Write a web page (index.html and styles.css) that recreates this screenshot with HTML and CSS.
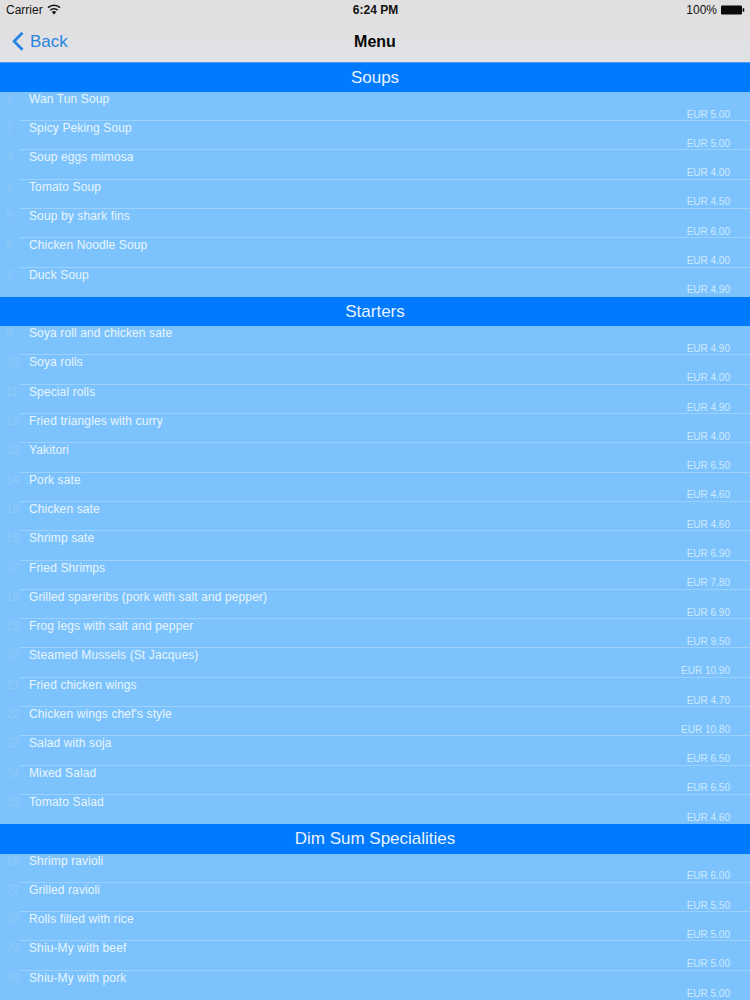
FILE: index.html
```html
<!DOCTYPE html>
<html lang="en">
<head>
<meta charset="utf-8">
<title>Menu</title>
<link rel="stylesheet" href="styles.css">
</head>
<body>
<header class="chrome">
  <div class="status">
    <div class="status-left"><span>Carrier</span>
      <svg class="wifi" viewBox="0 0 14 11" width="14" height="11"><path d="M7 10.4 4.8 8a3.1 3.1 0 0 1 4.4 0Z" fill="#111"/><path d="M3.3 6.2a5.3 5.3 0 0 1 7.4 0M1 3.6a8.6 8.6 0 0 1 12 0" fill="none" stroke="#111" stroke-width="1.5"/></svg>
    </div>
    <div class="status-time">6:24 PM</div>
    <div class="status-right"><span>100%</span>
      <svg class="battery" viewBox="0 0 24 10" width="24" height="10"><rect x="0" y="0.5" width="21" height="9" rx="1.2" fill="#0a0a0a"/><rect x="21.6" y="3.3" width="1.6" height="3.4" fill="#0a0a0a"/></svg>
    </div>
  </div>
  <nav class="navbar">
    <a class="back"><svg viewBox="0 0 14 22" width="14" height="21"><path d="M11.7 1.8 3 10.8l8.7 8.9" fill="none" stroke="#2a84e0" stroke-width="3"/></svg><span>Back</span></a>
    <h1 class="title">Menu</h1>
  </nav>
</header>
<main>
  <h2 class="section">Soups</h2>
  <div class="row"><span class="num">1</span><span class="name">Wan Tun Soup</span><span class="price">EUR 5.00</span></div>
  <div class="row"><span class="num">2</span><span class="name">Spicy Peking Soup</span><span class="price">EUR 5.00</span></div>
  <div class="row"><span class="num">3</span><span class="name">Soup eggs mimosa</span><span class="price">EUR 4.00</span></div>
  <div class="row"><span class="num">4</span><span class="name">Tomato Soup</span><span class="price">EUR 4.50</span></div>
  <div class="row"><span class="num">5</span><span class="name">Soup by shark fins</span><span class="price">EUR 6.00</span></div>
  <div class="row"><span class="num">6</span><span class="name">Chicken Noodle Soup</span><span class="price">EUR 4.00</span></div>
  <div class="row"><span class="num">7</span><span class="name">Duck Soup</span><span class="price">EUR 4.90</span></div>
  <h2 class="section">Starters</h2>
  <div class="row"><span class="num">9</span><span class="name">Soya roll and chicken sate</span><span class="price">EUR 4.90</span></div>
  <div class="row"><span class="num">10</span><span class="name">Soya rolls</span><span class="price">EUR 4.00</span></div>
  <div class="row"><span class="num">11</span><span class="name">Special rolls</span><span class="price">EUR 4.90</span></div>
  <div class="row"><span class="num">12</span><span class="name">Fried triangles with curry</span><span class="price">EUR 4.00</span></div>
  <div class="row"><span class="num">13</span><span class="name">Yakitori</span><span class="price">EUR 6.50</span></div>
  <div class="row"><span class="num">14</span><span class="name">Pork sate</span><span class="price">EUR 4.60</span></div>
  <div class="row"><span class="num">15</span><span class="name">Chicken sate</span><span class="price">EUR 4.60</span></div>
  <div class="row"><span class="num">16</span><span class="name">Shrimp sate</span><span class="price">EUR 6.90</span></div>
  <div class="row"><span class="num">17</span><span class="name">Fried Shrimps</span><span class="price">EUR 7.80</span></div>
  <div class="row"><span class="num">18</span><span class="name">Grilled spareribs (pork with salt and pepper)</span><span class="price">EUR 6.90</span></div>
  <div class="row"><span class="num">19</span><span class="name">Frog legs with salt and pepper</span><span class="price">EUR 9.50</span></div>
  <div class="row"><span class="num">20</span><span class="name">Steamed Mussels (St Jacques)</span><span class="price">EUR 10.90</span></div>
  <div class="row"><span class="num">21</span><span class="name">Fried chicken wings</span><span class="price">EUR 4.70</span></div>
  <div class="row"><span class="num">22</span><span class="name">Chicken wings chef's style</span><span class="price">EUR 10.80</span></div>
  <div class="row"><span class="num">23</span><span class="name">Salad with soja</span><span class="price">EUR 6.50</span></div>
  <div class="row"><span class="num">24</span><span class="name">Mixed Salad</span><span class="price">EUR 6.50</span></div>
  <div class="row"><span class="num">25</span><span class="name">Tomato Salad</span><span class="price">EUR 4.60</span></div>
  <h2 class="section">Dim Sum Specialities</h2>
  <div class="row"><span class="num">26</span><span class="name">Shrimp ravioli</span><span class="price">EUR 6.00</span></div>
  <div class="row"><span class="num">27</span><span class="name">Grilled ravioli</span><span class="price">EUR 5.50</span></div>
  <div class="row"><span class="num">28</span><span class="name">Rolls filled with rice</span><span class="price">EUR 5.00</span></div>
  <div class="row"><span class="num">29</span><span class="name">Shiu-My with beef</span><span class="price">EUR 5.00</span></div>
  <div class="row"><span class="num">30</span><span class="name">Shiu-My with pork</span><span class="price">EUR 5.00</span></div>
</main>
</body>
</html>
```
FILE: styles.css
```css
html, body { margin: 0; padding: 0; }
body {
  width: 750px;
  height: 1000px;
  overflow: hidden;
  background: #7cc3fd;
  font-family: "Liberation Sans", Arial, sans-serif;
}
.chrome {
  height: 62.5px;
  box-sizing: border-box;
  background: linear-gradient(#e1dfdf, #e0e2e6);
  border-bottom: 1px solid #4d9bf0;
  color: #111;
}
.status {
  height: 20px;
  padding: 0 5px 0 6px;
  display: grid;
  grid-template-columns: 1fr auto 1fr;
  align-items: center;
  font-size: 12px;
}
.status-left { display: flex; align-items: center; gap: 4px; }
.wifi { margin-top: -2px; }
.status-time { font-weight: 700; font-size: 12px; }
.status-right { display: flex; align-items: center; justify-content: flex-end; gap: 4px; }
.navbar {
  height: 41.5px;
  padding-top: 2px;
  box-sizing: border-box;
  display: grid;
  grid-template-columns: 1fr auto 1fr;
  align-items: center;
}
.back {
  display: flex;
  align-items: center;
  gap: 5px;
  padding-left: 11px;
  color: #2a84e0;
  font-size: 17px;
}
.title {
  margin: 0;
  font-size: 16px;
  font-weight: 700;
  color: #0a0a0a;
}
.section {
  margin: 0;
  height: 29.3px;
  line-height: 29px;
  background: #007aff;
  color: #e8f3ff;
  text-align: center;
  font-size: 17px;
  font-weight: 400;
}
.row {
  height: 29.3px;
  box-sizing: border-box;
  display: flex;
  position: relative;
  color: #e9f5ff;
}
.row + .row::before {
  content: "";
  position: absolute;
  top: -1px;
  left: 20px;
  right: 0;
  height: 1px;
  background: #9bd1fc;
}
.num {
  width: 29px;
  box-sizing: border-box;
  padding-left: 6px;
  font-size: 12px;
  line-height: 14px;
  color: #8fc9f8;
}
.name {
  flex: 1;
  font-size: 12px;
  line-height: 14px;
  letter-spacing: 0.12px;
}
.price {
  align-self: flex-end;
  margin-right: 20px;
  margin-bottom: -0.5px;
  font-size: 10px;
  line-height: 14px;
  color: #cfe9ff;
}
```
